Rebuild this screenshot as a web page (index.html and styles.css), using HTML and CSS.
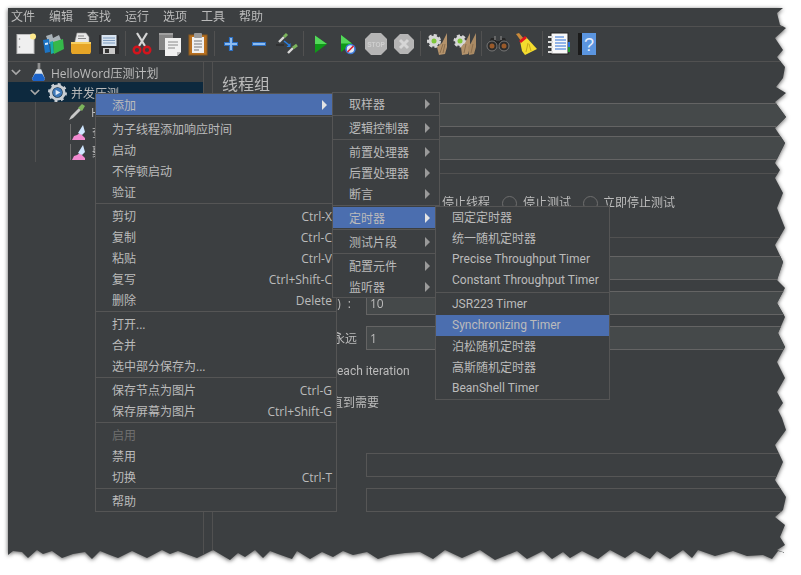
FILE: index.html
```html
<!DOCTYPE html>
<html lang="zh">
<head>
<meta charset="utf-8">
<title>JMeter</title>
<link rel="stylesheet" href="styles.css">
</head>
<body>
<div class="shadow">
<div class="window">
  <nav class="menubar">
    <span>文件</span><span>编辑</span><span>查找</span><span>运行</span><span>选项</span><span>工具</span><span>帮助</span>
  </nav>
  <div class="toolbar">
    <span class="tb"><svg viewBox="0 0 24 24"><rect x="4" y="2.500" width="17" height="19" fill="#efefef" stroke="#bdbdbd"/><circle cx="20" cy="4.500" r="3" fill="#ffe98c"/><circle cx="6.500" cy="7" r=".8" fill="#888"/><circle cx="6.500" cy="15" r=".8" fill="#888"/></svg></span>
    <span class="tb"><svg viewBox="0 0 24 24"><path d="M5 4l6-2 1 4 6-3 2 5-12 4z" fill="#a9b2b8"/><path d="M2 8l6-1 1 13-5 1z" fill="#1d74c4"/><path d="M9 10l3-1 1 12-3 1z" fill="#17a9b0"/><path d="M12 10l10-3 1 10-10 5z" fill="#35b94a"/><path d="M4 11l3-.5v2l-3 .5z" fill="#d9ecff"/></svg></span>
    <span class="tb"><svg viewBox="0 0 24 24"><path d="M6 9l2-8h9l3 4v6H6z" fill="#e8e8e8" stroke="#999" stroke-width=".6"/><path d="M9 4h6M9 6.500h8" stroke="#888"/><path d="M2 10h20v10l-1 2H3l-1-2z" fill="#e6a527"/><path d="M2 10h20v2H2z" fill="#f6cf62"/></svg></span>
    <span class="tb"><svg viewBox="0 0 24 24"><path d="M2 3h19l1 1v18H2z" fill="#2c2c2e"/><rect x="4.500" y="3" width="15" height="11" fill="#d9e4f0"/><path d="M6 6h12M6 8.500h12M6 11h12" stroke="#7f9cc0"/><rect x="6" y="16" width="12" height="6" fill="#c9c9c9"/><rect x="8" y="17" width="4" height="4" fill="#333"/></svg></span>
    <i class="tsep"></i>
    <span class="tb"><svg viewBox="0 0 24 24"><path d="M7 1l8 13M17 1L9 14" stroke="#d5d5d5" stroke-width="2.200"/><circle cx="7" cy="18" r="3.300" fill="none" stroke="#d3141c" stroke-width="2.400"/><circle cx="17" cy="18" r="3.300" fill="none" stroke="#d3141c" stroke-width="2.400"/></svg></span>
    <span class="tb"><svg viewBox="0 0 24 24"><rect x="1" y="1" width="14" height="17" fill="#858585"/><rect x="1" y="1" width="14" height="2" fill="#a0a0a0"/><path d="M7 6h16v14l-4 4H7z" fill="#f1f1f1"/><path d="M19 24v-4h4z" fill="#bbb"/><path d="M10 10h10M10 13h10M10 16h7" stroke="#8a8a8a"/></svg></span>
    <span class="tb"><svg viewBox="0 0 24 24"><rect x="3" y="3" width="18" height="20" fill="#b9701f" stroke="#8a5a20"/><rect x="6" y="5" width="12" height="16" fill="#f0f0f0"/><rect x="8" y="1" width="8" height="5" rx="1" fill="#9a9a9a"/><path d="M8 9h8M8 12h8M8 15h8M8 18h5" stroke="#777"/></svg></span>
    <i class="tsep"></i>
    <span class="tb"><svg viewBox="0 0 24 24"><path d="M12 5v14M5 12h14" stroke="#2c6fc2" stroke-width="4.200"/><path d="M12 6v12M6 12h12" stroke="#8dbcf0" stroke-width="2"/></svg></span>
    <span class="tb"><svg viewBox="0 0 24 24"><path d="M5 12h14" stroke="#2c6fc2" stroke-width="4.200"/><path d="M6 12h12" stroke="#8dbcf0" stroke-width="2"/></svg></span>
    <span class="tb"><svg viewBox="0 0 24 24"><path d="M4 10l5-5" stroke="#d8d8d8" stroke-width="2.400"/><path d="M9 5l3-3" stroke="#7cb55c" stroke-width="3"/><path d="M13 21l5-5" stroke="#d8d8d8" stroke-width="2.400"/><path d="M18 16l4-3" stroke="#7cb55c" stroke-width="3"/><path d="M9 9l5 4" stroke="#2a7fe0" stroke-width="1.600"/><path d="M15.500 11v4h-4z" fill="#2a7fe0"/><path d="M1 13h8" stroke="#222"/></svg></span>
    <i class="tsep"></i>
    <span class="tb"><svg viewBox="0 0 24 24"><path d="M7 3.500L19 12 7 21z" fill="#0f9a18"/><path d="M7 3.500L19 12H7z" fill="#54d85a"/></svg></span>
    <span class="tb"><svg viewBox="0 0 24 24"><path d="M5 3l11 8.500L5 20z" fill="#0f9a18"/><path d="M5 3l11 8.500H5z" fill="#54d85a"/><circle cx="14.500" cy="17" r="4.500" fill="#dfe8f5" stroke="#3a78d8" stroke-width="1.600"/><path d="M11.500 20l6-6" stroke="#e0202a" stroke-width="1.600"/></svg></span>
    <span class="tb"><svg viewBox="0 0 24 24"><path d="M7 1h10l6 6v10l-6 6H7l-6-6V7z" fill="#b5b5b5"/><text class="stop" x="12" y="15">STOP</text></svg></span>
    <span class="tb"><svg viewBox="0 0 24 24"><path d="M8 2h8l6 6v8l-6 6H8l-6-6V8z" fill="#b5b5b5"/><path d="M8 8l8 8M16 8l-8 8" stroke="#d6d6d6" stroke-width="3"/></svg></span>
    <i class="tsep"></i>
    <span class="tb"><svg viewBox="0 0 24 24"><circle cx="9" cy="9" r="5.500" fill="#d6d6d6" stroke="#d6d6d6" stroke-width="3" stroke-dasharray="3 2"/><circle cx="9" cy="9" r="2.500" fill="#7fc63a"/><path d="M22 1l-5 10-5 4 2 8 6-1 2-7z" fill="#b3926b"/><path d="M15 21l3-9M18 21l2-9" stroke="#8c6f4e"/></svg></span>
    <span class="tb"><svg viewBox="0 0 24 24"><circle cx="7" cy="9" r="5" fill="#d6d6d6" stroke="#d6d6d6" stroke-width="3" stroke-dasharray="3 2"/><circle cx="7" cy="9" r="2.500" fill="#7fc63a"/><path d="M17 1l-5 10-4 4 1 8 6-1 2-7z" fill="#b3926b"/><path d="M23 1l-5 10-3 4 1 8 5-1 2-7z" fill="#a98a64"/><path d="M11 21l2-9M18 21l2-9" stroke="#8c6f4e"/></svg></span>
    <i class="tsep"></i>
    <span class="tb"><svg viewBox="0 0 24 24"><path d="M5 6h4l1 3h4l1-3h4l4 9H1z" fill="#262626"/><rect x="8" y="4" width="2" height="4" fill="#666"/><rect x="14" y="4" width="2" height="4" fill="#666"/><circle cx="6" cy="14" r="5" fill="#2c2c2c" stroke="#777"/><circle cx="18" cy="14" r="5" fill="#2c2c2c" stroke="#777"/><circle cx="6" cy="14" r="2.500" fill="#9a5a2a"/><circle cx="18" cy="14" r="2.500" fill="#9a5a2a"/></svg></span>
    <span class="tb"><svg viewBox="0 0 24 24"><path d="M2 2l3-1 5 6-3 2z" fill="#c98a3a"/><path d="M6 9l6-4 11 12-12 6-3-4z" fill="#f4dc2e"/><path d="M5 9l6-5 2 2-6 5z" fill="#e0141e"/><path d="M12 20l2-9M17 19l-2-7" stroke="#c9a81a"/></svg></span>
    <i class="tsep"></i>
    <span class="tb"><svg viewBox="0 0 24 24"><rect x="4" y="1" width="17" height="21" fill="#f8f8f8" stroke="#222"/><path d="M8 5h9M8 8h11M8 11h11M8 14h11M8 17h11" stroke="#2a6fd8"/><path d="M1 5h5M1 10h5M1 15h5M1 20h5" stroke="#dcdcdc" stroke-width="2"/><rect x="21" y="10" width="2" height="5" fill="#2a6fd8"/><rect x="21" y="15" width="2" height="5" fill="#1f9a2c"/></svg></span>
    <span class="tb"><svg viewBox="0 0 24 24"><rect x="3" y="1" width="18" height="22" fill="#5b95df"/><rect x="3" y="1" width="4" height="22" fill="#1b1b1b"/><text class="help" x="14" y="19">?</text></svg></span>
  </div>
  <div class="main">
    <aside class="tree">
      <div class="node"><svg class="chev" viewBox="0 0 12 8"><path d="M1 1l5 5 5-5"/></svg><svg class="nicon flask" viewBox="0 0 16 20"><path d="M7 0h3v7h-3z" fill="#8f8f8f"/><path d="M6 7h5l4 10-1 3H2l-1-3z" fill="#dfe5ea"/><path d="M4 12h8l3 5-1 3H2l-1-3z" fill="#1c63c8"/></svg><span class="nlabel">HelloWord压测计划</span></div>
      <div class="node sel"><svg class="chev" viewBox="0 0 12 8"><path d="M1 1l5 5 5-5"/></svg><svg class="nicon gear" viewBox="0 0 20 20"><circle cx="10" cy="10" r="7" fill="none" stroke="#c9ced4" stroke-width="3"/><circle cx="10" cy="10" r="8.500" fill="none" stroke="#c9ced4" stroke-width="3" stroke-dasharray="3 3.670"/><circle cx="10" cy="10" r="5" fill="#3f78b8"/><path d="M8 7l5 3-5 3z" fill="#dfe8f5"/></svg><span class="nlabel">并发压测</span></div>
      <div class="kids">
        <div class="leaf"><svg class="licon drop" viewBox="0 0 18 18"><path d="M1 17l2-4 8-8 2 2-8 8z" fill="#c9c9c9"/><path d="M10 5l4-4 3 2-3 5z" fill="#7cb55c"/></svg><span>H</span></div>
        <div class="leaf"><svg class="licon graph" viewBox="0 0 16 17"><path d="M.5 0v16" stroke="#6f6f6f"/><path d="M2 16l2-4 3-1 3-2 5 5v2z" fill="#f28ad0"/><path d="M8 9l5-8 2 7-3 3z" fill="#cfe6ff"/></svg><span>查</span></div>
        <div class="leaf"><svg class="licon graph" viewBox="0 0 16 17"><path d="M.5 0v16" stroke="#6f6f6f"/><path d="M2 16l2-4 3-1 3-2 5 5v2z" fill="#f28ad0"/><path d="M8 9l5-8 2 7-3 3z" fill="#cfe6ff"/></svg><span>聚</span></div>
      </div>
    </aside>
    <section class="detail">
      <h1 class="title">线程组</h1>
      <div class="frow first"><i class="lab"></i><div class="field fill"></div></div>
      <div class="frow second"><i class="lab"></i><div class="field fill"></div></div>
      <div class="group">
        <div class="radios">
          <span>停止线程</span><i class="radio"></i><span>停止测试</span><i class="radio"></i><span>立即停止测试</span>
        </div>
      </div>
      <div class="frow third"><i class="lab wide"></i><div class="field fill"></div></div>
      <div class="frow gap"><label class="lab wide far">) :</label><div class="field fill num">10</div></div>
      <div class="frow gap"><label class="lab wide">永远</label><div class="field fill num">1</div></div>
      <div class="check c1">each iteration</div>
      <div class="check c2">直到需要</div>
      <div class="frow f6"><i class="lab wide"></i><div class="field"></div></div>
      <div class="frow gap"><i class="lab wide"></i><div class="field"></div></div>
    </section>
  </div>

  <div class="menu m-main">
    <div class="item hi"><span>添加</span><i class="arrow on"></i></div>
    <hr>
    <div class="item"><span>为子线程添加响应时间</span></div>
    <div class="item"><span>启动</span></div>
    <div class="item"><span>不停顿启动</span></div>
    <div class="item"><span>验证</span></div>
    <hr>
    <div class="item"><span>剪切</span><kbd>Ctrl-X</kbd></div>
    <div class="item"><span>复制</span><kbd>Ctrl-C</kbd></div>
    <div class="item"><span>粘贴</span><kbd>Ctrl-V</kbd></div>
    <div class="item"><span>复写</span><kbd>Ctrl+Shift-C</kbd></div>
    <div class="item"><span>删除</span><kbd>Delete</kbd></div>
    <hr>
    <div class="item"><span>打开...</span></div>
    <div class="item"><span>合并</span></div>
    <div class="item"><span>选中部分保存为...</span></div>
    <hr>
    <div class="item"><span>保存节点为图片</span><kbd>Ctrl-G</kbd></div>
    <div class="item"><span>保存屏幕为图片</span><kbd>Ctrl+Shift-G</kbd></div>
    <hr>
    <div class="item off"><span>启用</span></div>
    <div class="item"><span>禁用</span></div>
    <div class="item"><span>切换</span><kbd>Ctrl-T</kbd></div>
    <hr>
    <div class="item"><span>帮助</span></div>
  </div>

  <div class="menu m-sub1">
    <div class="item"><span>取样器</span><i class="arrow"></i></div>
    <hr>
    <div class="item"><span>逻辑控制器</span><i class="arrow"></i></div>
    <hr>
    <div class="item"><span>前置处理器</span><i class="arrow"></i></div>
    <div class="item"><span>后置处理器</span><i class="arrow"></i></div>
    <div class="item"><span>断言</span><i class="arrow"></i></div>
    <hr>
    <div class="item hi"><span>定时器</span><i class="arrow on"></i></div>
    <hr>
    <div class="item"><span>测试片段</span><i class="arrow"></i></div>
    <hr>
    <div class="item"><span>配置元件</span><i class="arrow"></i></div>
    <div class="item"><span>监听器</span><i class="arrow"></i></div>
  </div>

  <div class="menu m-sub2">
    <div class="item"><span>固定定时器</span></div>
    <div class="item"><span>统一随机定时器</span></div>
    <div class="item lat"><span>Precise Throughput Timer</span></div>
    <div class="item lat"><span>Constant Throughput Timer</span></div>
    <hr>
    <div class="item lat"><span>JSR223 Timer</span></div>
    <div class="item hi lat"><span>Synchronizing Timer</span></div>
    <div class="item"><span>泊松随机定时器</span></div>
    <div class="item"><span>高斯随机定时器</span></div>
    <div class="item lat"><span>BeanShell Timer</span></div>
  </div>
</div>
</div>
</body>
</html>
```
FILE: styles.css
```css
* { box-sizing: border-box; }
html, body { margin: 0; background: #fff; }
body { width: 801px; height: 575px; overflow: hidden; }
.shadow { padding: 8px; filter: drop-shadow(0 1px 2px rgba(0,0,0,.65)); }
.window {
  position: relative;
  width: 778px; height: 552px;
  overflow: hidden;
  background: #3c3f41;
  color: #bbb;
  font: 12px/21px "Open Sans", "Noto Sans CJK SC", sans-serif;
  clip-path: polygon(0 0, 775px 0, 769px 5px, 772px 17px, 778px 20px, 767px 30px, 775px 42px, 769px 49px, 777px 59px, 775px 70px, 768px 79px, 778px 85px, 767px 94px, 778px 109px, 767px 120px, 777px 135px, 767px 155px, 772px 162px, 767px 170px, 775px 185px, 769px 200px, 777px 220px, 767px 237px, 775px 254px, 769px 272px, 777px 280px, 769px 295px, 777px 309px, 770px 325px, 777px 339px, 769px 354px, 777px 370px, 769px 384px, 775px 395px, 770px 402px, 774px 410px, 778px 422px, 767px 437px, 775px 454px, 767px 472px, 778px 489px, 775px 502px, 767px 509px, 777px 517px, 772px 529px, 777px 537px, 769px 542px, 778px 545px, 770px 543px, 764px 551px, 755px 547px, 739px 548px, 725px 543px, 707px 548px, 690px 542px, 684px 550px, 675px 542px, 662px 551px, 649px 543px, 642px 551px, 627px 543px, 617px 550px, 602px 542px, 590px 551px, 574px 543px, 562px 550px, 555px 544px, 544px 551px, 535px 543px, 519px 551px, 509px 543px, 487px 552px, 472px 542px, 454px 550px, 437px 542px, 425px 551px, 412px 544px, 397px 545px, 382px 547px, 370px 551px, 359px 544px, 345px 547px, 335px 543px, 325px 549px, 314px 544px, 302px 551px, 289px 543px, 284px 551px, 270px 546px, 262px 543px, 255px 550px, 247px 542px, 237px 549px, 230px 545px, 222px 552px, 205px 542px, 189px 550px, 170px 543px, 162px 546px, 154px 542px, 139px 550px, 124px 543px, 110px 550px, 102px 547px, 92px 543px, 84px 551px, 77px 544px, 65px 546px, 54px 550px, 44px 543px, 35px 546px, 29px 542px, 20px 550px, 14px 544px, 5px 543px, 0 547px);
}

.menubar { height: 19px; border-bottom: 1px solid #515151; display: flex; gap: 14px; padding-left: 3px; line-height: 18px; }
.toolbar { height: 35px; border-bottom: 1px solid #515151; display: flex; align-items: center; padding: 0 0 1px 3px; }
.tb { width: 28px; height: 24px; display: flex; align-items: center; justify-content: center; flex: none; }
.tb svg { width: 24px; height: 24px; display: block; }
.tsep { width: 5px; height: 25px; flex: none; display: block; background: linear-gradient(#515151, #515151) center / 1px 100% no-repeat; }
.stop { font: bold 6.500px "Liberation Sans", sans-serif; fill: #cfcfcf; text-anchor: middle; }
.help { font: 18px "Liberation Sans", sans-serif; fill: #e6eefa; text-anchor: middle; }

.main { display: flex; height: 498px; }
.tree { width: 196px; flex: none; border-right: 1px solid #515151; }
.node { height: 20px; display: flex; align-items: center; white-space: nowrap; padding-left: 3px; }
.node + .node.sel { padding-left: 22px; }
.node.sel { background: #0d293e; }
.nlabel { margin-top: 2px; }
.chev { width: 10px; height: 7px; flex: none; margin-right: 10px; }
.chev path { fill: none; stroke: #a9a9a9; stroke-width: 2; }
.nicon { flex: none; display: block; }
.flask { width: 15px; height: 18px; margin-right: 5px; }
.gear { width: 19px; height: 19px; margin: 0 4px 0 -2px; }
.kids { margin-left: 27px; border-left: 1px solid #515151; }
.leaf { height: 20px; display: flex; align-items: center; white-space: nowrap; }
.licon { display: block; flex: none; }
.drop { width: 18px; height: 18px; margin: 0 5px 0 32px; }
.graph { width: 16px; height: 17px; margin: 0 6px 0 34px; }

.detail { margin-left: 8px; flex: none; width: 574px; border-left: 1px solid #515151; padding-left: 9px; }
.title { margin: 11px 0 8px; height: 22px; font-size: 16px; font-weight: 400; line-height: 22px; color: #bbb; }
.frow { display: flex; align-items: center; height: 24px; }
.lab { width: 47px; flex: none; display: block; }
.wide { width: 144px; text-align: right; padding-right: 9px; white-space: nowrap; }
.far { padding-right: 15px; word-spacing: 4px; }
.field { flex: 1; height: 24px; border: 1px solid #565656; border-right: 0; line-height: 23px; padding-left: 3px; }
.field.fill { background: #45494a; border-color: #646464; }
.second { margin-top: 9px; }
.third { margin-top: 18px; }
.gap { margin-top: 11px; }
.group { margin-top: 13px; height: 65px; border-top: 1px solid #515151; border-bottom: 1px solid #515151; padding: 21px 0 0 220px; }
.radios { display: flex; align-items: center; height: 16px; line-height: 16px; white-space: nowrap; }
.radio { width: 15px; height: 15px; border-radius: 50%; border: 1px solid #6e6e6e; background: #3c3f41; flex: none; margin: 0 6px 0 12px; }
.radio:last-of-type { margin-right: 5px; }
.check { height: 22px; line-height: 22px; white-space: nowrap; }
.c1 { margin-top: 10px; padding-left: 115px; font-family: Roboto, sans-serif; }
.c2 { margin-top: 10px; padding-left: 109px; }
.f6 { margin-top: 39px; }

.menu { position: absolute; background: #3c3f41; border: 1px solid #555; }
.menu hr { height: 1px; margin: 1px 0; border: 0; background: #555; }
.item { height: 21px; line-height: 21px; display: flex; justify-content: space-between; align-items: center; white-space: nowrap; }
.m-main .item > span, .m-main kbd, .m-sub1 .item > span { margin-top: 2px; }
.item.hi { background: #4b6eaf; }
.item.off { color: #6f6f6f; }
.item.lat { font-family: Roboto, "Noto Sans CJK SC", sans-serif; }
.item kbd { font: inherit; }
.arrow { width: 0; height: 0; border-left: 5px solid #9a9a9a; border-top: 5px solid transparent; border-bottom: 5px solid transparent; flex: none; }
.arrow.on { border-left-color: #e4e4e4; }
.m-main { left: 87px; top: 85px; width: 242px; }
.m-main .item { padding: 0 4px 0 16px; }
.m-main .item.hi { padding-right: 9px; }
.m-sub1 { left: 324px; top: 84px; width: 108px; }
.m-sub1 .item { padding: 0 9px 0 16px; }
.m-sub2 { left: 427px; top: 198px; width: 175px; }
.m-sub2 .item { padding: 0 8px 0 16px; }
```
